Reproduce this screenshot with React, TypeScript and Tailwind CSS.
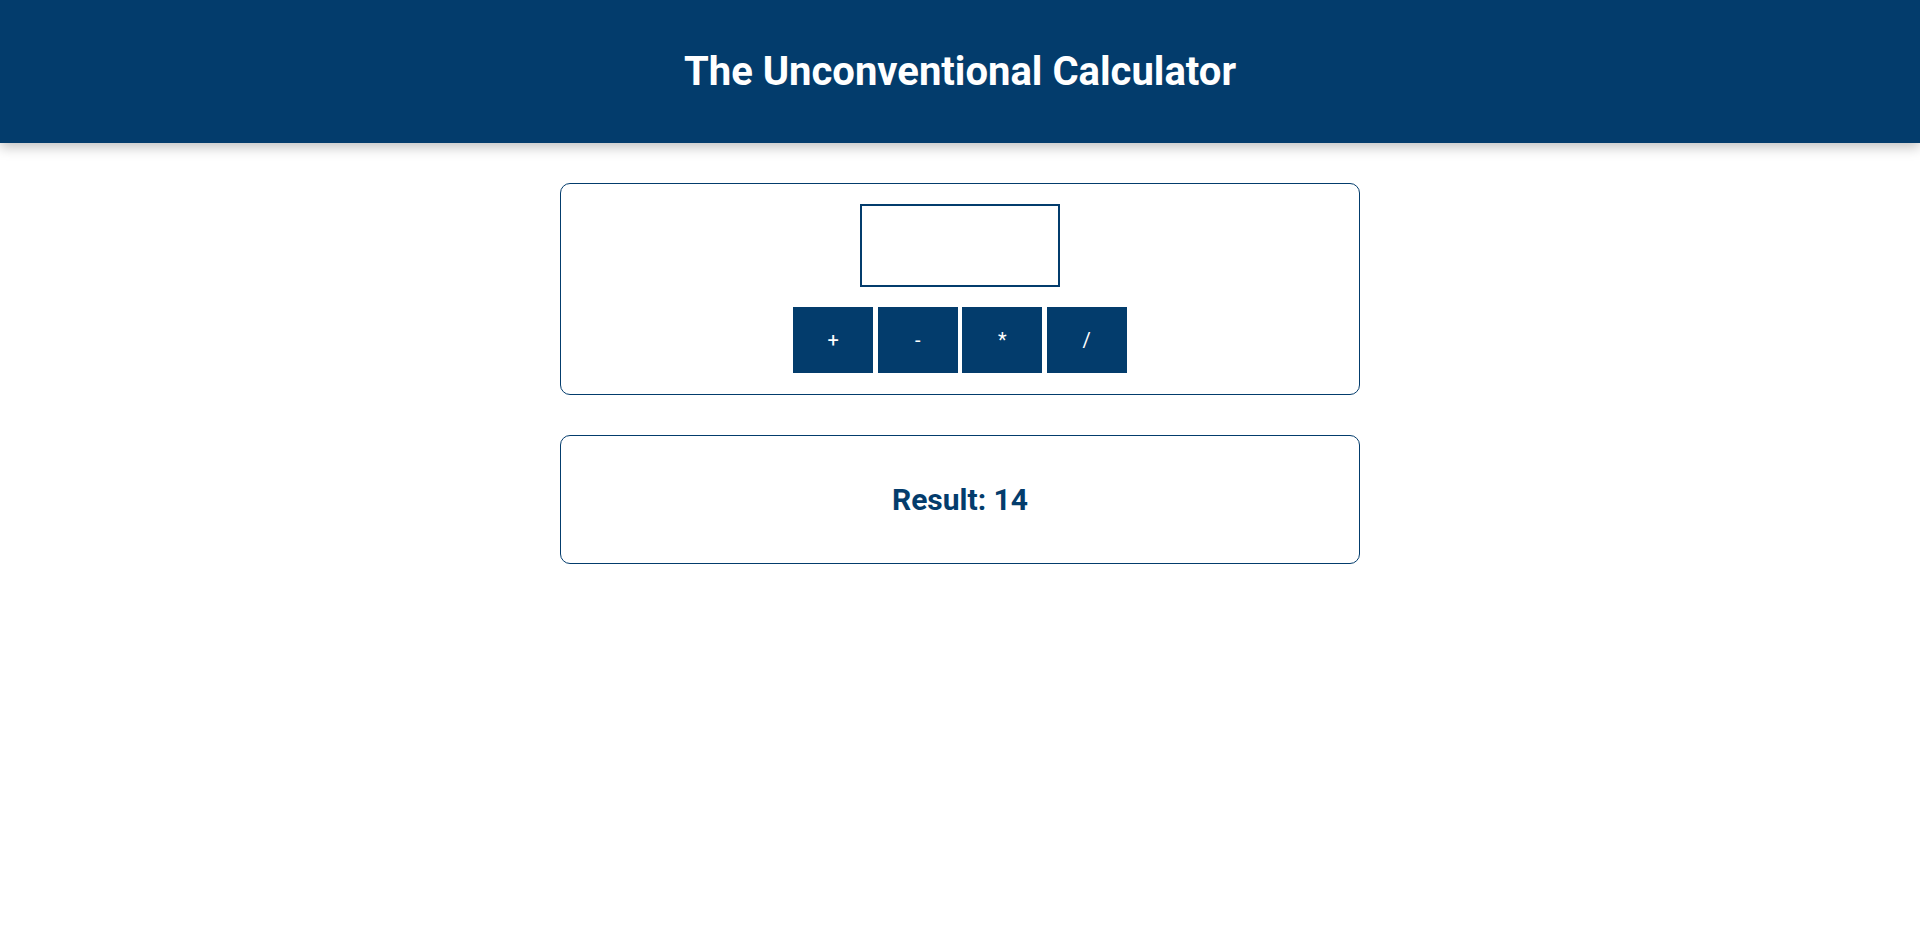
import { useState } from "react";

const ops = ["+", "-", "*", "/"];

export default function App() {
  const [value, setValue] = useState("");
  const [result] = useState(14);

  return (
    <div className="min-h-screen bg-white font-['Roboto',sans-serif]">
      <header className="flex h-[143px] items-center justify-center bg-[#033c6c] shadow-[0_4px_12px_rgba(0,0,0,0.25)]">
        <h1 className="text-[40px] font-bold text-white">
          The Unconventional Calculator
        </h1>
      </header>

      <main className="mx-auto mt-[40px] flex w-[800px] flex-col gap-[40px]">
        <section className="flex flex-col items-center gap-[20px] rounded-[10px] border border-[#033c6c] px-[20px] pt-[20px] pb-[21px]">
          <input
            type="text"
            value={value}
            onChange={(e) => setValue(e.target.value)}
            className="h-[83px] w-[200px] border-2 border-[#033c6c] outline-none"
          />
          <div className="flex gap-[4.5px]">
            {ops.map((op) => (
              <button
                key={op}
                className="h-[66px] w-[80px] bg-[#033c6c] text-[20px] text-white"
              >
                {op}
              </button>
            ))}
          </div>
        </section>

        <section className="flex h-[129px] items-center justify-center rounded-[10px] border border-[#033c6c]">
          <h2 className="text-[30px] font-bold text-[#033c6c]">
            Result: {result}
          </h2>
        </section>
      </main>
    </div>
  );
}
